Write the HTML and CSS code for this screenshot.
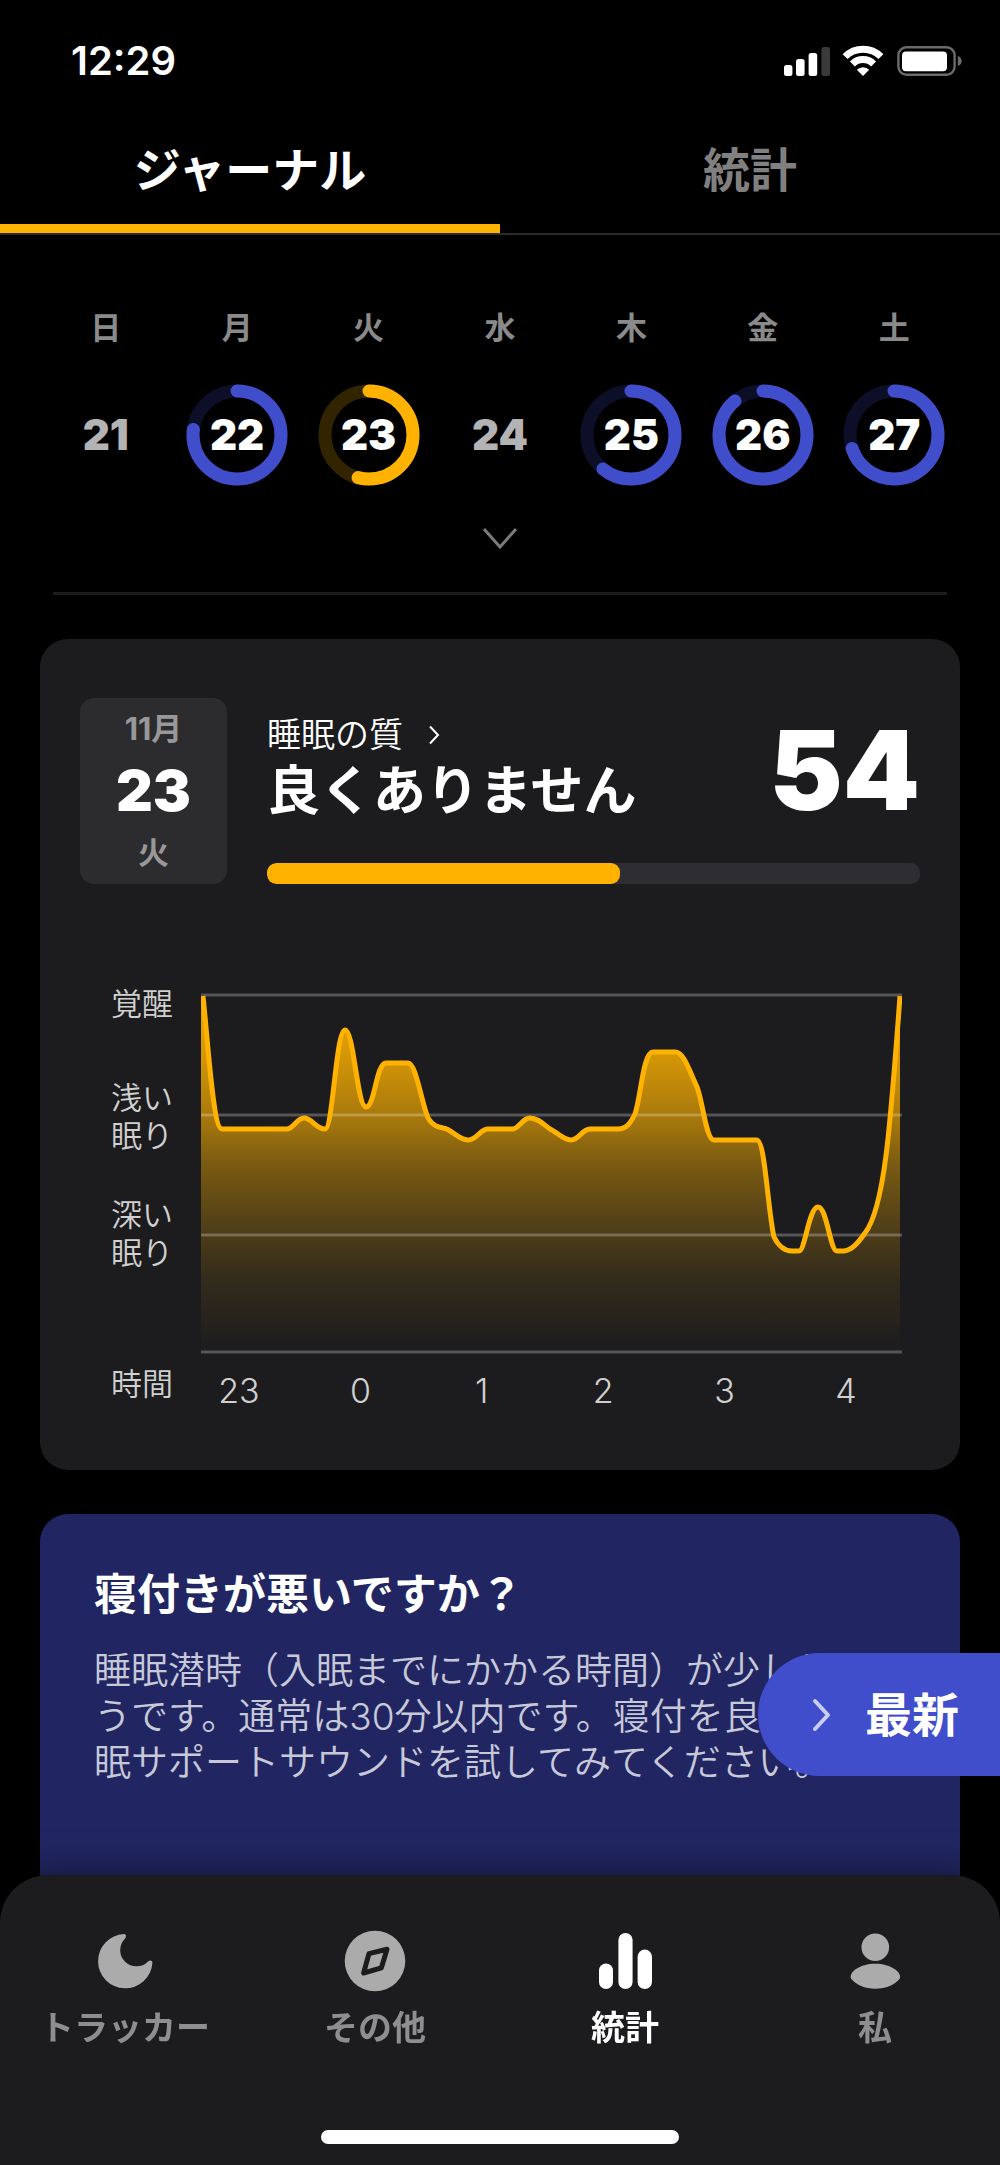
FILE: index.html
```html
<!DOCTYPE html>
<html lang="ja">
<head>
    <meta charset="UTF-8">
    <meta name="viewport" content="width=device-width, initial-scale=1.0">
    <title>ジャーナル</title>
    <link rel="stylesheet" href="styles.css">
</head>
<body>

<header>
    <div class="status-bar">
        <span class="clock">12:29</span>
        <svg class="status-icons" viewBox="0 0 185 34" aria-hidden="true">
            <g fill="#fff">
                <rect x="4" y="21" width="8.4" height="11" rx="2.5"/>
                <rect x="16" y="15" width="8.6" height="17" rx="2.5"/>
                <rect x="28.6" y="9" width="8.6" height="23" rx="2.5"/>
                <rect x="41.4" y="3" width="8.6" height="29" rx="2.5" fill="#3a3a3a"/>
                <path d="M83 32 L76.8 25.8 A8.8 8.8 0 0 1 89.2 25.8Z"/>
                <rect x="122" y="7.6" width="45" height="19.6" rx="4"/>
            </g>
            <g fill="none" stroke="#fff" stroke-width="7">
                <path d="M65.1 12.6 A25.3 25.3 0 0 1 100.9 12.6"/>
                <path d="M72.4 19.9 A15 15 0 0 1 93.6 19.9"/>
            </g>
            <rect x="118.4" y="3.2" width="56.2" height="27.6" rx="8" fill="none" stroke="#6b6b6b" stroke-width="2.4"/>
            <path d="M177.8 12 C183 13.5 183 20.5 177.8 22Z" fill="#6b6b6b"/>
        </svg>
    </div>
    <nav class="tabs">
        <a class="tab active" href="#journal">ジャーナル</a>
        <a class="tab" href="#stats">統計</a>
    </nav>
</header>

<main>
    <section class="week">
        <div class="days">
            <button class="day">
                <span class="weekday">日</span>
                <span class="ring"><span class="date">21</span></span>
            </button>
            <button class="day scored">
                <span class="weekday">月</span>
                <span class="ring">
                    <svg viewBox="0 0 102 102"><circle class="track" cx="51" cy="51" r="44"/><circle class="value" cx="51" cy="51" r="44" pathLength="100" stroke-dasharray="77 100"/></svg>
                    <span class="date">22</span>
                </span>
            </button>
            <button class="day scored low">
                <span class="weekday">火</span>
                <span class="ring">
                    <svg viewBox="0 0 102 102"><circle class="track" cx="51" cy="51" r="44"/><circle class="value" cx="51" cy="51" r="44" pathLength="100" stroke-dasharray="54 100"/></svg>
                    <span class="date">23</span>
                </span>
            </button>
            <button class="day">
                <span class="weekday">水</span>
                <span class="ring"><span class="date">24</span></span>
            </button>
            <button class="day scored">
                <span class="weekday">木</span>
                <span class="ring">
                    <svg viewBox="0 0 102 102"><circle class="track" cx="51" cy="51" r="44"/><circle class="value" cx="51" cy="51" r="44" pathLength="100" stroke-dasharray="61 100"/></svg>
                    <span class="date">25</span>
                </span>
            </button>
            <button class="day scored">
                <span class="weekday">金</span>
                <span class="ring">
                    <svg viewBox="0 0 102 102"><circle class="track" cx="51" cy="51" r="44"/><circle class="value" cx="51" cy="51" r="44" pathLength="100" stroke-dasharray="89 100"/></svg>
                    <span class="date">26</span>
                </span>
            </button>
            <button class="day scored">
                <span class="weekday">土</span>
                <span class="ring">
                    <svg viewBox="0 0 102 102"><circle class="track" cx="51" cy="51" r="44"/><circle class="value" cx="51" cy="51" r="44" pathLength="100" stroke-dasharray="70 100"/></svg>
                    <span class="date">27</span>
                </span>
            </button>
        </div>
        <button class="expand" aria-label="カレンダーを開く">
            <svg width="36" height="24" viewBox="0 0 36 24"><path d="M2 2 L18 20 L34 2" fill="none" stroke="#7a7a7a" stroke-width="3"/></svg>
        </button>
    </section>

    <section class="card sleep">
        <div class="summary">
            <div class="date-box">
                <span class="small">11月</span>
                <span class="big">23</span>
                <span class="small">火</span>
            </div>
            <div class="quality">
                <div class="quality-row">
                    <div>
                        <a class="quality-link" href="#quality">睡眠の質
                            <svg width="12" height="20" viewBox="0 0 12 20"><path d="M2 1.5 L10 10 L2 18.5" fill="none" stroke="#fff" stroke-width="2"/></svg>
                        </a>
                        <h1>良くありません</h1>
                    </div>
                    <span class="score">54</span>
                </div>
                <div class="bar" role="progressbar" aria-label="睡眠の質" aria-valuenow="54" aria-valuemin="0" aria-valuemax="100">
                    <div class="bar-fill" style="width: 54%"></div>
                </div>
            </div>
        </div>

        <div class="chart">
            <div class="stages">
                <span>覚醒</span>
                <span>浅い<br>眠り</span>
                <span>深い<br>眠り</span>
            </div>
            <svg class="plot" viewBox="0 0 701 362">
                <defs>
                    <linearGradient id="fill" gradientUnits="userSpaceOnUse" x1="0" y1="3" x2="0" y2="360">
                        <stop offset="0" stop-color="#ffb300" stop-opacity="0.95"/>
                        <stop offset="0.2" stop-color="#ffb300" stop-opacity="0.78"/>
                        <stop offset="0.37" stop-color="#ffb300" stop-opacity="0.58"/>
                        <stop offset="0.47" stop-color="#ffb300" stop-opacity="0.42"/>
                        <stop offset="0.66" stop-color="#ffb300" stop-opacity="0.22"/>
                        <stop offset="0.8" stop-color="#ffb300" stop-opacity="0.1"/>
                        <stop offset="1" stop-color="#ffb300" stop-opacity="0"/>
                    </linearGradient>
                </defs>
                <!-- sleep depth, area then line -->
                <path fill="url(#fill)" d="M0 4 H2 C7 50 12 137 21 137 H86 C93 136 96 126 103 126 C111 126 115 137 124 137 C132 137 135 38 144 38 C153 38 156 115 165 115 C174 115 175 71 185 71 H207 C215 71 220 109 227 126 C232 134 237 135 242 136 C251 137 257 148 267 148 C276 148 279 137 287 137 H312 C319 136 321 126 329 126 C337 126 342 132 349 137 C356 140 362 148 370 148 C378 148 381 137 389 137 H417 C426 137 430 130 434 122 C440 105 442 60 452 60 H474 C483 60 488 78 496 95 C502 110 505 148 513 148 H556 C564 148 567 220 573 245 C578 255 585 259 591 259 H598 C604 259 608 215 617 215 C626 215 629 259 636 259 H643 C651 258 657 251 664 241 C683 217 689 140 699 4 V360 H0 Z"/>
                <g stroke="#fff" stroke-opacity="0.25" stroke-width="3">
                    <path d="M0 3 H701"/>
                    <path d="M0 123 H701"/>
                    <path d="M0 243 H701"/>
                    <path d="M0 360 H701"/>
                </g>
                <path fill="none" stroke="#ffb300" stroke-width="5" stroke-linejoin="round" d="M2 4 C7 50 12 137 21 137 H86 C93 136 96 126 103 126 C111 126 115 137 124 137 C132 137 135 38 144 38 C153 38 156 115 165 115 C174 115 175 71 185 71 H207 C215 71 220 109 227 126 C232 134 237 135 242 136 C251 137 257 148 267 148 C276 148 279 137 287 137 H312 C319 136 321 126 329 126 C337 126 342 132 349 137 C356 140 362 148 370 148 C378 148 381 137 389 137 H417 C426 137 430 130 434 122 C440 105 442 60 452 60 H474 C483 60 488 78 496 95 C502 110 505 148 513 148 H556 C564 148 567 220 573 245 C578 255 585 259 591 259 H598 C604 259 608 215 617 215 C626 215 629 259 636 259 H643 C651 258 657 251 664 241 C683 217 689 140 699 4"/>
            </svg>
            <span class="axis-name">時間</span>
            <div class="hours">
                <span>23</span>
                <span>0</span>
                <span>1</span>
                <span>2</span>
                <span>3</span>
                <span>4</span>
            </div>
        </div>
    </section>

    <section class="card tip">
        <h2>寝付きが悪いですか？</h2>
        <p>睡眠潜時（入眠までにかかる時間）が少し長いようです。通常は30分以内です。寝付を良くする睡眠サポートサウンドを試してみてください。</p>
    </section>
</main>

<button class="latest">
    <svg width="20" height="34" viewBox="0 0 20 34"><path d="M3 3 L16 17 L3 31" fill="none" stroke="#c9cdf5" stroke-width="4" stroke-linecap="round" stroke-linejoin="round"/></svg>
    <span>最新</span>
</button>

<footer class="bottom-bar">
    <nav class="menu">
        <a href="#tracker">
            <svg viewBox="0 0 64 64"><path d="M31 5 A27.2 27.2 0 1 0 59.4 34 C59.8 31.8 57 30.8 55 32.4 A16.1 16.1 0 0 1 31.7 10 C33.6 8 33.4 5 31 5Z"/></svg>
            トラッカー
        </a>
        <a href="#other">
            <svg viewBox="0 0 64 64"><circle cx="32" cy="32" r="30.3"/><path d="M26 24.6 L44 20.2 L38.4 38.8 L20.6 44 Z" fill="none" stroke="#1c1c1e" stroke-width="5" stroke-linejoin="round"/></svg>
            その他
        </a>
        <a class="active" href="#stats">
            <svg viewBox="0 0 64 64"><rect x="6" y="34.4" width="14" height="25.6" rx="7"/><rect x="25.4" y="4" width="14.2" height="56" rx="7.1"/><rect x="44.6" y="20.6" width="14.4" height="39.4" rx="7.2"/></svg>
            統計
        </a>
        <a href="#me">
            <svg viewBox="0 0 64 64"><circle cx="32.3" cy="18.3" r="13.8"/><path d="M8 49.5 C5.5 43 17 34.7 32.3 34.7 S59 43 56.8 49.5 C52 56 43 59.8 32.3 59.8 S13 56 8 49.5Z"/></svg>
            私
        </a>
    </nav>
    <div class="home-indicator"></div>
</footer>

</body>
</html>
```

FILE: styles.css
```css
* {
    box-sizing: border-box;
}

body {
    margin: 0;
    background-color: #000;
    color: #fff;
    font-family: Inter, "Noto Sans CJK JP", sans-serif;
}

h1, h2, p {
    margin: 0;
}

a {
    color: inherit;
    text-decoration: none;
}

button {
    margin: 0;
    padding: 0;
    border: none;
    background: none;
    color: inherit;
    font-family: inherit;
    cursor: pointer;
}

svg {
    display: block;
}

/* status bar */
.status-bar {
    display: flex;
    justify-content: space-between;
    align-items: center;
    padding: 38px 35px 28px 71px;
}

.clock {
    font-size: 40px;
    line-height: 46px;
    font-weight: 600;
}

.status-icons {
    width: 185px;
    height: 34px;
}

/* tabs */
.tabs {
    display: flex;
    border-bottom: 2px solid #2b2b2d;
}

.tab {
    flex: 1;
    padding: 31px 0 27px;
    border-bottom: 9px solid transparent;
    color: #808080;
    font-size: 47px;
    line-height: 54px;
    font-weight: 700;
    text-align: center;
}

.tab.active {
    border-bottom-color: #ffb300;
    color: #fff;
}

main {
    padding: 75px 40px 240px;
}

/* week */
.week {
    margin: 0 13px 44px;
    border-bottom: 3px solid #1c1c1e;
    text-align: center;
}

.days {
    display: grid;
    grid-template-columns: repeat(7, 1fr);
    margin: 0 -13px;
}

.day {
    display: flex;
    flex-direction: column;
    align-items: center;
    gap: 38px;
    color: #b3b3b3;
}

.weekday {
    color: #8a8a8a;
    font-size: 31px;
    line-height: 36px;
    font-weight: 700;
}

.ring {
    display: grid;
    place-items: center;
    width: 102px;
    height: 102px;
}

.ring svg, .date {
    grid-area: 1 / 1;
}

.ring circle {
    fill: none;
    stroke: #414ecb;
    stroke-width: 13;
}

.ring .track {
    stroke: #0d0f29;
}

.ring .value {
    stroke-linecap: round;
    transform: rotate(-90deg);
    transform-origin: center;
}

.low .value {
    stroke: #ffb300;
}

.low .track {
    stroke: #332400;
}

.date {
    font-size: 42px;
    line-height: 50px;
    font-weight: 900;
}

.scored .date {
    color: #fff;
}

.expand {
    display: inline-flex;
    align-items: center;
    justify-content: center;
    width: 60px;
    height: 60px;
    margin: 23px 0;
    vertical-align: top;
}

/* cards */
.card {
    border-radius: 28px;
    background-color: #1c1c1e;
}

.sleep {
    padding: 59px 40px 60px;
}

.summary {
    display: flex;
    gap: 40px;
}

.date-box {
    display: flex;
    flex-direction: column;
    align-items: center;
    justify-content: space-between;
    width: 147px;
    padding: 11px 0;
    border-radius: 14px;
    background-color: #2c2c2e;
}

.small {
    color: #98989a;
    font-size: 31px;
    line-height: 40px;
    font-weight: 700;
}

.big {
    font-size: 57px;
    line-height: 60px;
    font-weight: 900;
}

.quality {
    flex: 1;
    padding-top: 16px;
}

.quality-row {
    display: flex;
    justify-content: space-between;
    align-items: center;
    margin-bottom: 37px;
}

.quality-link {
    display: flex;
    align-items: center;
    gap: 25px;
    font-size: 34px;
    line-height: 42px;
    font-weight: 350;
}

h1 {
    font-size: 53px;
    line-height: 70px;
    font-weight: 700;
}

.score {
    font-size: 110px;
    line-height: 110px;
    font-weight: 900;
}

.bar {
    height: 21px;
    border-radius: 9px;
    background-color: #2e2d32;
    overflow: hidden;
}

.bar-fill {
    height: 100%;
    border-radius: 9px;
    background-color: #ffb300;
}

/* chart */
.chart {
    display: grid;
    grid-template-columns: 90px 1fr;
    row-gap: 11px;
    margin-top: 101px;
    padding: 0 18px 0 31px;
    color: #d0d0d0;
    font-size: 31px;
    line-height: 38px;
    font-weight: 350;
}

.stages {
    display: grid;
    grid-template-rows: 94px 117px 1fr;
}

.plot {
    width: 100%;
    margin-top: 7px;
}

.hours {
    display: flex;
    justify-content: space-between;
    padding: 7px 26px 0 8px;
    font-size: 34px;
}

.hours span {
    width: 60px;
    text-align: center;
}

/* tip */
.tip {
    margin-top: 44px;
    padding: 55px 38px 120px 54px;
    background-color: #212663;
}

.tip h2 {
    margin-bottom: 29px;
    font-size: 43px;
    line-height: 50px;
    font-weight: 700;
}

.tip p {
    color: #c8c9d8;
    font-size: 37px;
    line-height: 46px;
    font-weight: 350;
}

.latest {
    position: fixed;
    right: 0;
    bottom: 389px;
    display: flex;
    align-items: center;
    gap: 33px;
    height: 123px;
    padding: 0 41px 0 54px;
    border-radius: 62px 0 0 62px;
    background-color: #414ecb;
    font-size: 47px;
    line-height: 54px;
    font-weight: 700;
}

/* bottom bar */
.bottom-bar {
    position: fixed;
    left: 0;
    right: 0;
    bottom: 0;
    padding: 54px 0 21px;
    border-radius: 48px 48px 0 0;
    background-color: #1c1c1e;
    box-shadow: 0 0 40px rgba(0, 0, 0, 0.5);
}

.menu {
    display: flex;
}

.menu a {
    flex: 1;
    display: flex;
    flex-direction: column;
    align-items: center;
    gap: 15px;
    color: #8e8e90;
    font-size: 34px;
    line-height: 40px;
    font-weight: 700;
}

.menu svg {
    width: 64px;
    height: 64px;
    fill: #ababab;
}

.menu a.active {
    color: #fff;
}

.menu a.active svg {
    fill: #fff;
}

.home-indicator {
    width: 358px;
    height: 14px;
    margin: 82px auto 0;
    border-radius: 7px;
    background-color: #fff;
}
```
